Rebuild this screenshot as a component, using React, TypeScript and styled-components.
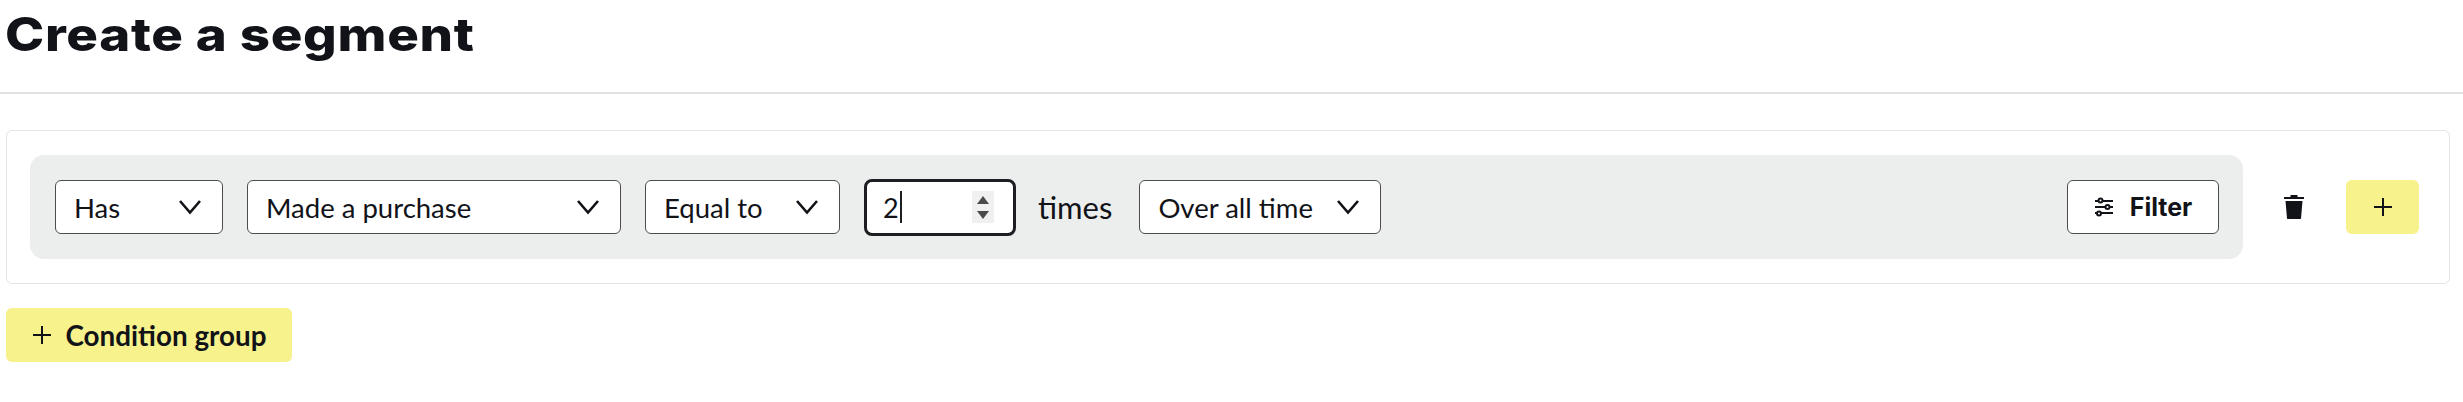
import styled, { createGlobalStyle } from "styled-components";

const GlobalStyle = createGlobalStyle`
  html, body {
    margin: 0;
    padding: 0;
    background: #ffffff;
  }
  body {
    font-family: "Lato", "Noto Sans", sans-serif;
    color: #111318;
  }
`;

const Page = styled.div`
  width: 2463px;
  height: 402px;
  overflow: hidden;
`;

const Header = styled.header`
  height: 92px;
  padding-left: 5px;
  border-bottom: 2px solid #e1e2e2;
`;

const Title = styled.h1`
  margin: 0;
  padding-top: 8px;
  font-family: "Inter", sans-serif;
  font-size: 46px;
  line-height: 52px;
  font-weight: 800;
  letter-spacing: 0.6px;
  transform: scaleX(1.147);
  transform-origin: left center;
`;

const Content = styled.main`
  padding: 36px 13px 0 6px;
`;

const Card = styled.section`
  display: flex;
  align-items: center;
  height: 154px;
  box-sizing: border-box;
  padding: 0 30px 0 23px;
  border: 1px solid #e3e4e4;
  border-radius: 6px;
`;

const Condition = styled.div`
  display: flex;
  align-items: center;
  flex: 1;
  height: 104px;
  box-sizing: border-box;
  padding: 0 24px 0 25px;
  background: #eceeed;
  border-radius: 14px;
`;

const Select = styled.div<{ $width: number; $gap?: number }>`
  display: flex;
  align-items: center;
  justify-content: space-between;
  width: ${(p) => p.$width}px;
  height: 54px;
  box-sizing: border-box;
  margin-right: ${(p) => p.$gap ?? 24}px;
  padding: 0 20px 0 18px;
  background: #ffffff;
  border: 1px solid #4a4c4e;
  border-radius: 6px;
  font-size: 27.5px;
`;

const NumberField = styled.div`
  display: flex;
  align-items: center;
  width: 152px;
  height: 57px;
  box-sizing: border-box;
  padding: 0 19px 0 16px;
  background: #ffffff;
  border: 3px solid #1c1e21;
  border-radius: 8px;
  font-size: 27px;
`;

const Caret = styled.span`
  width: 2px;
  height: 32px;
  margin-left: 1px;
  background: #1c1e21;
`;

const Spinner = styled.div`
  display: flex;
  flex-direction: column;
  align-items: center;
  justify-content: center;
  gap: 7px;
  width: 22px;
  height: 32px;
  margin-left: auto;
  background: #f0f0f0;
`;

const Times = styled.span`
  margin: 0 27px 0 22px;
  font-size: 31px;
`;

const FilterButton = styled.button`
  display: flex;
  align-items: center;
  justify-content: center;
  gap: 16px;
  width: 152px;
  height: 54px;
  margin-left: auto;
  padding: 0;
  background: #ffffff;
  border: 1px solid #4a4c4e;
  border-radius: 6px;
  color: inherit;
  font: 700 25px "Inter", sans-serif;
`;

const IconButton = styled.button`
  display: flex;
  align-items: center;
  justify-content: center;
  width: 40px;
  height: 54px;
  margin: 0 32px 0 31px;
  padding: 0;
  background: none;
  border: none;
  color: inherit;
`;

const YellowButton = styled.button<{ $wide?: boolean }>`
  display: flex;
  align-items: center;
  justify-content: center;
  gap: 14px;
  width: ${(p) => (p.$wide ? 286 : 73)}px;
  height: 54px;
  padding: 0;
  background: #f7f28b;
  border: none;
  border-radius: 6px;
  color: inherit;
  font: 700 27.8px "Lato", sans-serif;
`;

const AddGroup = styled.div`
  margin-top: 24px;
`;

const Chevron = () => (
  <svg width="24" height="16" viewBox="0 0 24 16" fill="none" stroke="#111318" strokeWidth="2.6">
    <path d="M2 2l10 11.5L22 2" />
  </svg>
);

const Plus = () => (
  <svg width="20" height="20" viewBox="0 0 20 20" fill="none" stroke="#111318" strokeWidth="2">
    <path d="M10 1v18M1 10h18" />
  </svg>
);

const Sliders = () => (
  <svg width="20" height="20" viewBox="0 0 20 20" fill="none" stroke="#111318" strokeWidth="2">
    <path d="M1 4h18M1 10h18M1 16h18" />
    <circle cx="6.5" cy="3.5" r="2" fill="#fff" />
    <circle cx="13.5" cy="10" r="2" fill="#fff" />
    <circle cx="5" cy="16.5" r="2" fill="#fff" />
  </svg>
);

const Trash = () => (
  <svg width="20" height="24" viewBox="0 0 20 24" fill="#111318">
    <path d="M6.5 0h7v2h6.500v2H0V2h6.500z" />
    <path d="M1.500 6h17l-1.500 17.500a.6.6 0 0 1-.6.500H3.600a.6.6 0 0 1-.6-.5z" />
  </svg>
);

const SpinUp = () => (
  <svg width="12" height="8" viewBox="0 0 12 8" fill="#4a4a4a">
    <path d="M6 0l6 8H0z" />
  </svg>
);

const SpinDown = () => (
  <svg width="12" height="8" viewBox="0 0 12 8" fill="#4a4a4a">
    <path d="M0 0h12L6 8z" />
  </svg>
);

const App = () => {
  return (
    <Page>
      <GlobalStyle />
      <Header>
        <Title>Create a segment</Title>
      </Header>
      <Content>
        <Card>
          <Condition>
            <Select $width={168}>
              Has
              <Chevron />
            </Select>
            <Select $width={374}>
              Made a purchase
              <Chevron />
            </Select>
            <Select $width={195}>
              Equal to
              <Chevron />
            </Select>
            <NumberField>
              2
              <Caret />
              <Spinner>
                <SpinUp />
                <SpinDown />
              </Spinner>
            </NumberField>
            <Times>times</Times>
            <Select $width={242} $gap={0}>
              Over all time
              <Chevron />
            </Select>
            <FilterButton>
              <Sliders />
              Filter
            </FilterButton>
          </Condition>
          <IconButton aria-label="Delete">
            <Trash />
          </IconButton>
          <YellowButton aria-label="Add">
            <Plus />
          </YellowButton>
        </Card>
        <AddGroup>
          <YellowButton $wide>
            <Plus />
            Condition group
          </YellowButton>
        </AddGroup>
      </Content>
    </Page>
  );
};

export default App;
